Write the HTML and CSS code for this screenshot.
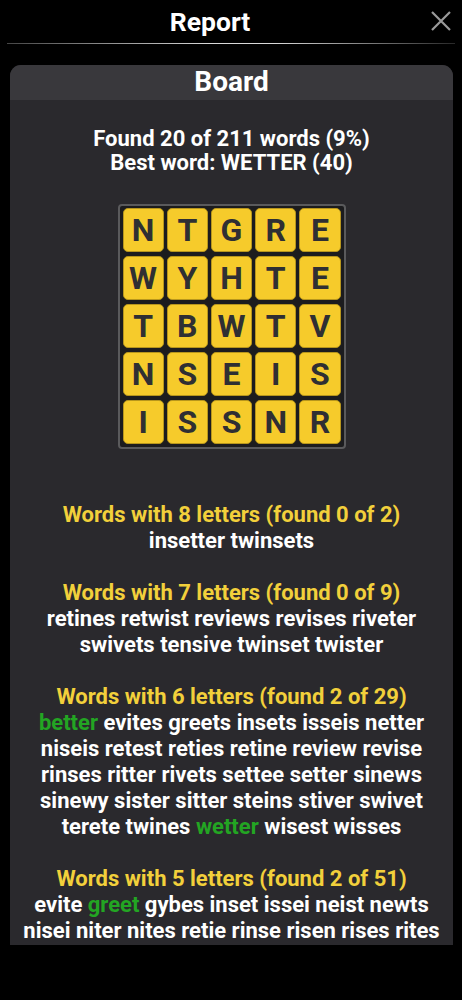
FILE: index.html
```html
<!DOCTYPE html>
<html>
<head>
<meta charset="utf-8">
<link rel="stylesheet" href="styles.css">
</head>
<body>
<header class="topbar">
  <div class="title">Report</div>
  <div class="close-btn"><svg viewBox="0 0 22 22" width="22" height="22"><path d="M2 2 L20 20 M20 2 L2 20" stroke="#9a9a9a" stroke-width="2.2" fill="none"/></svg></div>
</header>
<div class="rule"></div>
<section class="card">
  <div class="card-head">Board</div>
  <div class="card-body">
    <div class="summary">Found 20 of 211 words (9%)<br>Best word: WETTER (40)</div>
    <div class="board">
      <div class="tile">N</div><div class="tile">T</div><div class="tile">G</div><div class="tile">R</div><div class="tile">E</div>
      <div class="tile">W</div><div class="tile">Y</div><div class="tile">H</div><div class="tile">T</div><div class="tile">E</div>
      <div class="tile">T</div><div class="tile">B</div><div class="tile">W</div><div class="tile">T</div><div class="tile">V</div>
      <div class="tile">N</div><div class="tile">S</div><div class="tile">E</div><div class="tile">I</div><div class="tile">S</div>
      <div class="tile">I</div><div class="tile">S</div><div class="tile">S</div><div class="tile">N</div><div class="tile">R</div>
    </div>
    <div class="group">
      <div class="group-title">Words with 8 letters (found 0 of 2)</div>
      <div class="words">insetter twinsets</div>
    </div>
    <div class="group">
      <div class="group-title">Words with 7 letters (found 0 of 9)</div>
      <div class="words">retines retwist reviews revises riveter<br>swivets tensive twinset twister</div>
    </div>
    <div class="group">
      <div class="group-title">Words with 6 letters (found 2 of 29)</div>
      <div class="words"><span class="found">better</span> evites greets insets isseis netter<br>niseis retest reties retine review revise<br>rinses ritter rivets settee setter sinews<br>sinewy sister sitter steins stiver swivet<br>terete twines <span class="found">wetter</span> wisest wisses</div>
    </div>
    <div class="group">
      <div class="group-title">Words with 5 letters (found 2 of 51)</div>
      <div class="words">evite <span class="found">greet</span> gybes inset issei neist newts<br>nisei niter nites retie rinse risen rises rites</div>
    </div>
  </div>
</section>
</body>
</html>
```
FILE: styles.css
```css
html, body {
  margin: 0;
  padding: 0;
  background: #000;
  height: 1000px;
  overflow: hidden;
}
body {
  font-family: Roboto, "Noto Sans", sans-serif;
  color: #fff;
}
.topbar {
  height: 43px;
  display: flex;
  align-items: center;
}
.title {
  flex: 1;
  text-align: center;
  font-size: 26.5px;
  font-weight: 700;
  line-height: 43px;
}
.close-btn {
  width: 42px;
  height: 43px;
  display: flex;
  align-items: center;
  justify-content: flex-start;
  padding: 0 0 1px 10px;
  box-sizing: border-box;
}
.rule {
  height: 1px;
  margin: 0 7px;
  background: linear-gradient(to right, rgba(200,200,200,0.35), #d8d8d8 45%, #d8d8d8 60%, rgba(200,200,200,0.2));
}
.card {
  margin: 21px 9px 0 10px;
  height: 880px;
  border-radius: 11px 11px 0 0;
  overflow: hidden;
  background: #2a292d;
  display: flex;
  flex-direction: column;
}
.card-head {
  height: 35px;
  flex: none;
  background: #39383c;
  text-align: center;
  font-size: 28px;
  font-weight: 700;
  line-height: 34px;
}
.card-body {
  flex: 1;
  overflow: hidden;
  text-align: center;
  padding-top: 27px;
}
.summary {
  font-size: 22px;
  font-weight: 700;
  line-height: 24px;
}
.board {
  margin: 29px auto 0;
  width: 228px;
  height: 245px;
  box-sizing: border-box;
  border: 2px solid #5a5a5c;
  border-radius: 4px;
  background: #1c1c1e;
  padding: 2px 3px 3px 3px;
  display: grid;
  grid-template-columns: repeat(5, 1fr);
  grid-template-rows: repeat(5, 1fr);
  column-gap: 3px;
  row-gap: 4px;
}
.tile {
  background: #f6cb2b;
  border: 1px solid #b8961c;
  border-radius: 5px;
  color: #2f2f33;
  font-size: 32px;
  font-weight: 700;
  display: flex;
  align-items: center;
  justify-content: center;
}
.group {
  margin-top: 26px;
  font-size: 22px;
  font-weight: 700;
  line-height: 26px;
}
.board + .group {
  margin-top: 53px;
}
.group-title {
  color: #f2d03b;
}
.words {
  color: #fff;
}
.found {
  color: #23a523;
}
```
